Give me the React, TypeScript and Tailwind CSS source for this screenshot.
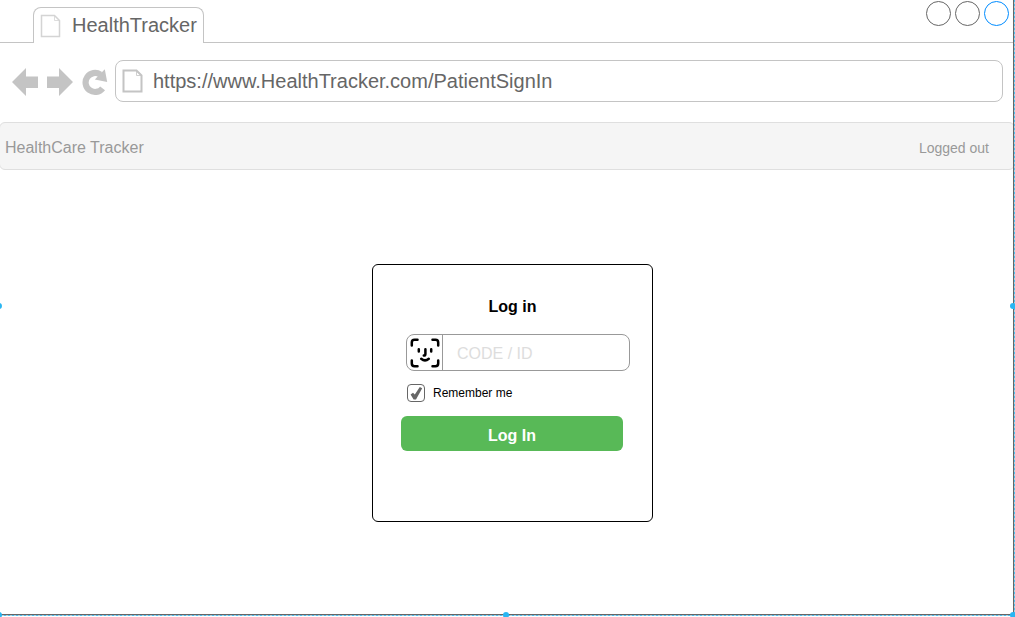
import { useState } from "react";

function PageIcon({ className, weight }: { className: string; weight: number }) {
  return (
    <svg className={className} viewBox="0 0 21 24" fill="none" aria-hidden="true">
      <path
        d="M1.5 1.5H14.5L19.5 6.5V22.5H1.5Z"
        fill="white"
        stroke="currentColor"
        strokeWidth={weight}
      />
      <path d="M14.5 1.5V6.5H19.5" stroke="currentColor" strokeWidth="0.8" />
    </svg>
  );
}

function BackIcon() {
  return (
    <svg className="h-7 w-[26px]" viewBox="0 0 26 28" fill="currentColor" aria-hidden="true">
      <path d="M0 14L14 0V8.5H26V20H14V28Z" />
    </svg>
  );
}

function ForwardIcon() {
  return (
    <svg className="h-7 w-[26px]" viewBox="0 0 26 28" fill="currentColor" aria-hidden="true">
      <path d="M26 14L12 0V8.5H0V20H12V28Z" />
    </svg>
  );
}

function ReloadIcon() {
  return (
    <svg className="h-7 w-[26px]" viewBox="0 0 26 28" fill="none" aria-hidden="true">
      <path
        d="M20.6 20.3A9.5 9.5 0 1 1 18.4 6.6"
        stroke="currentColor"
        strokeWidth="6.2"
      />
      <path d="M22.8 1.2L25.2 14L12.8 11.4Z" fill="currentColor" />
    </svg>
  );
}

function FaceIcon() {
  return (
    <svg
      className="h-[30px] w-[30px]"
      viewBox="0 0 30 30"
      fill="none"
      stroke="currentColor"
      strokeWidth="2.5"
      strokeLinecap="round"
      aria-hidden="true"
    >
      <path d="M1.8 7.5V4.5Q1.8 1.8 4.5 1.8H7.5M22.5 1.8H25.5Q28.2 1.8 28.2 4.5V7.5M28.2 22.5V25.5Q28.2 28.2 25.5 28.2H22.5M7.5 28.2H4.5Q1.8 28.2 1.8 25.5V22.5" />
      <path d="M8.8 11.3V13.4M21.2 11.3V13.4M15.4 11.3V16Q15.4 17.6 13.8 17.6M11.2 20.8Q15 24 18.8 20.8" />
    </svg>
  );
}

function BrowserTop() {
  return (
    <header>
      <div className="flex h-[43px]">
        <div className="w-[33px] border-b border-[#c4c4c4]" />
        <div className="mt-[7px] flex items-center gap-[11px] rounded-t-lg border border-b-0 border-[#c4c4c4] pr-[6px] pl-[6px]">
          <PageIcon className="h-6 w-[21px] text-[#d4d4d4]" weight={1.5} />
          <span className="pb-[2px] text-xl leading-6 text-[#666666]">HealthTracker</span>
        </div>
        <div className="flex flex-1 justify-end gap-1 border-b border-[#c4c4c4] pt-px pr-1">
          <button type="button" aria-label="Minimize" className="size-[25px] rounded-full border border-[#666666]" />
          <button type="button" aria-label="Maximize" className="size-[25px] rounded-full border border-[#666666]" />
          <button type="button" aria-label="Close" className="size-[25px] rounded-full border border-[#008cff]" />
        </div>
      </div>
      <div className="flex items-center pt-[17px] pr-[10px] pb-[20px] pl-[12px]">
        <div className="flex gap-[9px] pt-[2px] pr-[7px] text-[#c4c4c4]">
          <button type="button" aria-label="Back"><BackIcon /></button>
          <button type="button" aria-label="Forward"><ForwardIcon /></button>
          <button type="button" aria-label="Reload"><ReloadIcon /></button>
        </div>
        <div className="flex h-[42px] flex-1 items-center gap-[10px] rounded-lg border border-[#c4c4c4] pl-[6px]">
          <PageIcon className="h-6 w-[21px] text-[#c4c4c4]" weight={2} />
          <input
            type="text"
            aria-label="Address"
            defaultValue="https://www.HealthTracker.com/PatientSignIn"
            className="min-w-0 flex-1 text-xl leading-6 text-[#666666] outline-none"
          />
        </div>
      </div>
    </header>
  );
}

function LoginCard() {
  const [remember, setRemember] = useState(true);
  return (
    <form
      className="w-[281px] rounded-md border border-black pt-[30px] pb-[70px] text-black"
      onSubmit={(event) => event.preventDefault()}
    >
      <h1 className="text-center text-base leading-6 font-bold">Log in</h1>
      <div className="mt-[15px] mr-[22px] ml-[33px] flex h-[37px] rounded-lg border border-[#999999]">
        <button
          type="button"
          aria-label="Scan face"
          className="flex w-[36px] items-center justify-center border-r border-[#999999]"
        >
          <FaceIcon />
        </button>
        <input
          type="text"
          aria-label="Code or ID"
          placeholder="CODE / ID"
          className="min-w-0 flex-1 px-[14px] pt-[2px] text-base outline-none placeholder:text-[#dddddd]"
        />
      </div>
      <label className="mt-[13px] ml-[34px] flex items-center gap-2 text-xs">
        <span className="relative size-[18px]">
          <input
            type="checkbox"
            checked={remember}
            onChange={(event) => setRemember(event.target.checked)}
            className="peer block size-[18px] appearance-none rounded border border-[#666666]"
          />
          <svg
            className="pointer-events-none absolute inset-0 hidden size-[18px] text-[#666666] peer-checked:block"
            viewBox="0 0 18 18"
            fill="currentColor"
            aria-hidden="true"
          >
            <path d="M3.6 10.6L6 8.8L7.8 10.4L12.8 3L15.2 4.2L9 15.4H6.6Z" />
          </svg>
        </span>
        Remember me
      </label>
      <div className="mt-[14px] mr-[29px] ml-[28px]">
        <button
          type="submit"
          className="h-[35px] w-full rounded-md bg-[#58b957] pt-1 text-base font-bold text-white"
        >
          Log In
        </button>
      </div>
    </form>
  );
}

function SelectionFrame() {
  return (
    <div className="pointer-events-none absolute inset-0" aria-hidden="true">
      <div className="absolute top-0 right-px bottom-[2px] border-r border-[#666666]" />
      <div className="absolute top-0 right-0 bottom-[2px] w-px bg-[repeating-linear-gradient(to_bottom,#4fc0f0_0_2px,#b5cfdc_2px_4px)]" />
      <div className="absolute right-0 bottom-[2px] left-0 border-b border-[#666666]" />
      <div className="absolute right-0 bottom-px left-0 h-px bg-[repeating-linear-gradient(to_right,#4fc0f0_0_2px,#b5cfdc_2px_4px)]" />
      <i className="absolute top-1/2 -left-1 -mt-[6px] size-[6px] rounded-full bg-[#29b6f2]" />
      <i className="absolute top-1/2 -right-px -mt-[6px] size-[6px] rounded-full bg-[#29b6f2]" />
      <i className="absolute -bottom-px -left-1 size-[6px] rounded-full bg-[#29b6f2]" />
      <i className="absolute -bottom-px left-1/2 -ml-[5px] size-[6px] rounded-full bg-[#29b6f2]" />
      <i className="absolute -right-px -bottom-px size-[6px] rounded-full bg-[#29b6f2]" />
    </div>
  );
}

export default function App() {
  return (
    <div className="relative flex min-h-screen flex-col overflow-hidden bg-white font-['Liberation_Sans',Arial,sans-serif]">
      <div className="pr-[2px]">
        <BrowserTop />
      </div>
      <nav className="-ml-px flex h-[48px] items-center justify-between rounded-md border border-[#dfdfdf] bg-[#f5f5f5] pt-[3px] pr-[25px] pl-[5px] text-[#999999]">
        <span className="text-base">HealthCare Tracker</span>
        <span className="text-sm">Logged out</span>
      </nav>
      <main className="flex flex-1 items-start justify-center pt-[94px] pb-10 pl-[10px]">
        <LoginCard />
      </main>
      <SelectionFrame />
    </div>
  );
}
